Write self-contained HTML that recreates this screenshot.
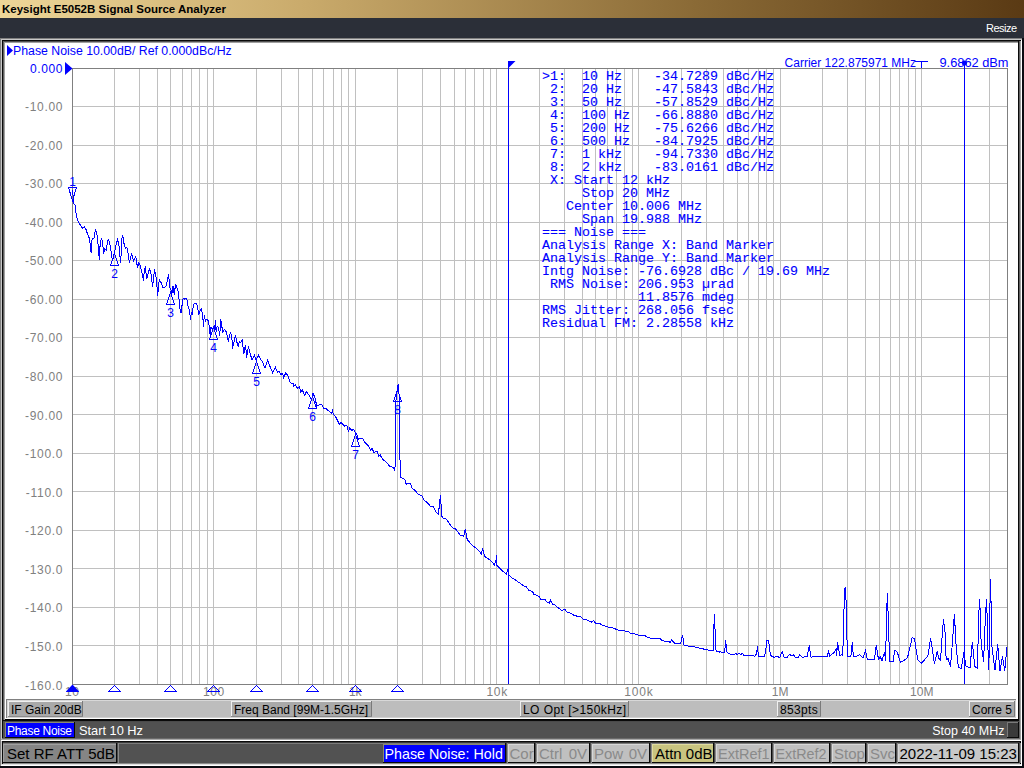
<!DOCTYPE html>
<html><head><meta charset="utf-8"><title>E5052B</title><style>
html,body{margin:0;padding:0;width:1024px;height:768px;overflow:hidden;background:#000;position:relative}
.a{position:absolute}
.t{position:absolute;white-space:pre;line-height:normal}
</style></head><body>
<div class="a" style="left:0px;top:0px;width:1024px;height:18px;background:linear-gradient(to right,#eed698 0%,#c9aa6b 30%,#8a6a36 68%,#5a3a14 100%);"></div>
<div class="t" style="left:2px;top:3px;font-size:11.5px;color:#000;font-weight:bold;font-family:'Liberation Sans',sans-serif;">Keysight E5052B Signal Source Analyzer</div>
<div class="a" style="left:0px;top:18px;width:1024px;height:20px;background:#2b2f38;"></div>
<div class="t" style="right:7.4px;top:22px;font-size:11px;color:#fff;font-weight:normal;font-family:'Liberation Sans',sans-serif;letter-spacing:-0.5px">Resize</div>
<div class="a" style="left:0px;top:38px;width:1024px;height:1px;background:#808080;"></div>
<div class="a" style="left:0px;top:39px;width:1022px;height:1px;background:#c8c8c8;"></div>
<div class="a" style="left:2px;top:40px;width:1018px;height:1px;background:#0a0a0a;"></div>
<div class="a" style="left:3px;top:41px;width:1016px;height:1px;background:#505050;"></div>
<div class="a" style="left:4px;top:42px;width:1015px;height:1px;background:#a0a0a0;"></div>
<div class="a" style="left:0px;top:38px;width:1px;height:730px;background:#808080;"></div>
<div class="a" style="left:1px;top:39px;width:1px;height:727px;background:#c8c8c8;"></div>
<div class="a" style="left:2px;top:40px;width:1px;height:699px;background:#0a0a0a;"></div>
<div class="a" style="left:3px;top:41px;width:1px;height:697px;background:#606060;"></div>
<div class="a" style="left:4px;top:42px;width:1px;height:696px;background:#a0a0a0;"></div>
<div class="a" style="left:1018px;top:41px;width:1px;height:679px;background:#0a0a0a;"></div>
<div class="a" style="left:1019px;top:41px;width:1px;height:698px;background:#606060;"></div>
<div class="a" style="left:1020px;top:41px;width:1px;height:698px;background:#a0a0a0;"></div>
<div class="a" style="left:1021px;top:40px;width:1px;height:726px;background:#ffffff;"></div>
<div class="a" style="left:1022px;top:38px;width:2px;height:730px;background:#0a0a10;"></div>
<div class="a" style="left:5px;top:43px;width:1013px;height:656px;background:#ffffff;"></div>
<svg class="a" style="left:0;top:0" width="1024" height="768" viewBox="0 0 1024 768"><path d="M114.5 68V684M139.5 68V684M157.5 68V684M170.5 68V684M182.5 68V684M191.5 68V684M199.5 68V684M207.5 68V684M213.5 68V684M256.5 68V684M281.5 68V684M298.5 68V684M312.5 68V684M323.5 68V684M333.5 68V684M341.5 68V684M348.5 68V684M355.5 68V684M397.5 68V684M422.5 68V684M440.5 68V684M454.5 68V684M465.5 68V684M474.5 68V684M483.5 68V684M490.5 68V684M496.5 68V684M539.5 68V684M564.5 68V684M582.5 68V684M595.5 68V684M607.5 68V684M616.5 68V684M624.5 68V684M632.5 68V684M638.5 68V684M681.5 68V684M706.5 68V684M723.5 68V684M737.5 68V684M748.5 68V684M758.5 68V684M766.5 68V684M773.5 68V684M780.5 68V684M822.5 68V684M847.5 68V684M865.5 68V684M879.5 68V684M890.5 68V684M899.5 68V684M908.5 68V684M915.5 68V684M921.5 68V684M964.5 68V684M989.5 68V684M964.5 68V684M989.5 68V684M72 106.5H1007M72 145.5H1007M72 183.5H1007M72 222.5H1007M72 260.5H1007M72 299.5H1007M72 337.5H1007M72 376.5H1007M72 414.5H1007M72 453.5H1007M72 491.5H1007M72 530.5H1007M72 568.5H1007M72 607.5H1007M72 645.5H1007" stroke="#c0c0c0" stroke-width="1" fill="none" shape-rendering="crispEdges"/><rect x="72.5" y="68.5" width="935" height="616" stroke="#808080" stroke-width="1" fill="none" shape-rendering="crispEdges"/><path d="M508.5 61V684M964.5 63V684" stroke="#0000ff" stroke-width="1" fill="none" shape-rendering="crispEdges"/><path d="M508 61H515.5L508 68.5Z" fill="#0000ff"/><circle cx="964.5" cy="63" r="2.5" fill="#0000ff"/><path d="M915 61.5H928M921.5 61V68" stroke="#0000ff" stroke-width="1" fill="none" shape-rendering="crispEdges"/><path d="M65 62L72.5 68.5L65 75Z" fill="#0000ff"/><path d="M7 45L13 50.5L7 56Z" fill="#0000ff"/></svg>

<div class="t" style="right:961px;top:62px;font-size:12px;color:#0000ff;font-weight:normal;font-family:'Liberation Sans',sans-serif;letter-spacing:0.6px">0.000</div>
<div class="t" style="right:960.8px;top:100px;font-size:12px;color:#808080;font-weight:normal;font-family:'Liberation Sans',sans-serif;letter-spacing:0.7px">-10.00</div>
<div class="t" style="right:960.8px;top:139px;font-size:12px;color:#808080;font-weight:normal;font-family:'Liberation Sans',sans-serif;letter-spacing:0.7px">-20.00</div>
<div class="t" style="right:960.8px;top:177px;font-size:12px;color:#808080;font-weight:normal;font-family:'Liberation Sans',sans-serif;letter-spacing:0.7px">-30.00</div>
<div class="t" style="right:960.8px;top:216px;font-size:12px;color:#808080;font-weight:normal;font-family:'Liberation Sans',sans-serif;letter-spacing:0.7px">-40.00</div>
<div class="t" style="right:960.8px;top:254px;font-size:12px;color:#808080;font-weight:normal;font-family:'Liberation Sans',sans-serif;letter-spacing:0.7px">-50.00</div>
<div class="t" style="right:960.8px;top:293px;font-size:12px;color:#808080;font-weight:normal;font-family:'Liberation Sans',sans-serif;letter-spacing:0.7px">-60.00</div>
<div class="t" style="right:960.8px;top:331px;font-size:12px;color:#808080;font-weight:normal;font-family:'Liberation Sans',sans-serif;letter-spacing:0.7px">-70.00</div>
<div class="t" style="right:960.8px;top:370px;font-size:12px;color:#808080;font-weight:normal;font-family:'Liberation Sans',sans-serif;letter-spacing:0.7px">-80.00</div>
<div class="t" style="right:960.8px;top:409px;font-size:12px;color:#808080;font-weight:normal;font-family:'Liberation Sans',sans-serif;letter-spacing:0.7px">-90.00</div>
<div class="t" style="right:960.8px;top:447px;font-size:12px;color:#808080;font-weight:normal;font-family:'Liberation Sans',sans-serif;letter-spacing:0.7px">-100.0</div>
<div class="t" style="right:960.8px;top:486px;font-size:12px;color:#808080;font-weight:normal;font-family:'Liberation Sans',sans-serif;letter-spacing:0.7px">-110.0</div>
<div class="t" style="right:960.8px;top:524px;font-size:12px;color:#808080;font-weight:normal;font-family:'Liberation Sans',sans-serif;letter-spacing:0.7px">-120.0</div>
<div class="t" style="right:960.8px;top:563px;font-size:12px;color:#808080;font-weight:normal;font-family:'Liberation Sans',sans-serif;letter-spacing:0.7px">-130.0</div>
<div class="t" style="right:960.8px;top:601px;font-size:12px;color:#808080;font-weight:normal;font-family:'Liberation Sans',sans-serif;letter-spacing:0.7px">-140.0</div>
<div class="t" style="right:960.8px;top:640px;font-size:12px;color:#808080;font-weight:normal;font-family:'Liberation Sans',sans-serif;letter-spacing:0.7px">-150.0</div>
<div class="t" style="right:960.8px;top:679px;font-size:12px;color:#808080;font-weight:normal;font-family:'Liberation Sans',sans-serif;letter-spacing:0.7px">-160.0</div>
<div class="t" style="left:-127.75px;width:400px;text-align:center;top:685px;font-size:12px;color:#808080;font-weight:normal;font-family:'Liberation Sans',sans-serif;letter-spacing:0.5px">10</div>
<div class="t" style="left:13.87px;width:400px;text-align:center;top:685px;font-size:12px;color:#808080;font-weight:normal;font-family:'Liberation Sans',sans-serif;letter-spacing:0.5px">100</div>
<div class="t" style="left:155.24px;width:400px;text-align:center;top:685px;font-size:12px;color:#808080;font-weight:normal;font-family:'Liberation Sans',sans-serif;letter-spacing:0px">1k</div>
<div class="t" style="left:297.27px;width:400px;text-align:center;top:685px;font-size:12px;color:#808080;font-weight:normal;font-family:'Liberation Sans',sans-serif;letter-spacing:0.8px">10k</div>
<div class="t" style="left:438.89px;width:400px;text-align:center;top:685px;font-size:12px;color:#808080;font-weight:normal;font-family:'Liberation Sans',sans-serif;letter-spacing:0.8px">100k</div>
<div class="t" style="left:580.11px;width:400px;text-align:center;top:685px;font-size:12px;color:#808080;font-weight:normal;font-family:'Liberation Sans',sans-serif;letter-spacing:0px">1M</div>
<div class="t" style="left:721.73px;width:400px;text-align:center;top:685px;font-size:12px;color:#808080;font-weight:normal;font-family:'Liberation Sans',sans-serif;letter-spacing:0px">10M</div>
<div class="t" style="left:13px;top:44px;font-size:12.3px;color:#0000ff;font-weight:normal;font-family:'Liberation Sans',sans-serif;">Phase Noise 10.00dB/ Ref 0.000dBc/Hz</div>
<div class="t" style="right:108px;top:56px;font-size:12px;color:#0000ff;font-weight:normal;font-family:'Liberation Sans',sans-serif;">Carrier 122.875971 MHz</div>
<div class="t" style="right:15.5px;top:55px;font-size:12.8px;color:#0000ff;font-weight:normal;font-family:'Liberation Sans',sans-serif;">9.6862 dBm</div>
<svg class="a" style="left:0;top:0" width="1024" height="768" viewBox="0 0 1024 768"><polyline points="72.5,190.0 73.0,195.0 73.0,198.9 73.0,202.3 75.4,205.7 75.9,212.6 77.4,219.4 79.3,223.3 82.3,228.2 84.2,226.7 85.7,228.7 87.6,234.1 89.6,239.0 91.0,251.6 91.5,252.6 92.0,239.9 93.0,238.5 94.0,238.0 95.4,229.2 96.9,234.1 98.4,246.8 99.3,259.9 100.3,240.9 101.8,238.5 103.3,248.7 103.7,254.1 104.7,248.7 106.2,249.7 108.1,239.4 109.6,241.9 111.1,251.6 112.5,261.4 115.0,249.7 117.4,239.4 118.9,244.4 119.8,255.3 120.6,262.6 121.2,252.6 121.6,240.8 122.6,234.8 123.5,239.9 124.4,246.2 125.7,248.1 126.7,247.1 127.6,250.8 128.5,255.3 129.4,263.1 130.3,258.1 131.7,254.4 132.6,256.3 133.5,262.2 134.4,259.0 135.8,256.3 136.7,262.6 137.6,268.1 138.5,262.6 139.9,264.5 141.2,269.9 142.2,273.6 143.5,280.9 144.4,269.0 145.3,267.2 146.7,279.0 147.6,275.4 149.4,268.1 151.3,275.4 152.6,287.3 154.5,269.0 155.8,275.4 156.7,283.6 157.7,295.5 158.6,284.5 159.3,280.0 160.0,281.2 161.4,283.0 162.7,287.1 164.6,287.6 166.4,285.3 167.7,278.9 168.7,274.4 169.1,279.9 170.0,288.0 171.4,290.3 171.9,293.5 172.8,286.2 173.7,286.2 174.1,295.3 174.6,291.7 175.5,284.9 176.4,286.2 178.2,291.7 179.1,299.4 180.1,309.9 181.0,312.7 181.9,306.3 183.2,298.1 184.6,299.0 186.0,298.1 187.3,300.8 188.3,308.1 189.6,309.9 190.5,320.0 191.4,311.8 192.4,315.4 193.3,304.5 194.6,303.6 196.5,303.6 197.8,308.1 198.7,314.5 200.1,310.8 201.5,309.0 202.8,317.2 203.6,327.3 204.2,315.4 205.6,320.9 206.9,319.0 208.3,320.9 209.7,328.2 210.1,335.5 211.0,327.3 212.4,330.0 213.4,326.2 214.3,330.8 215.5,320.3 216.1,331.7 217.0,327.1 217.9,326.2 218.8,329.9 219.7,336.2 220.7,319.4 221.6,325.3 222.9,332.1 224.3,329.4 226.1,331.7 227.5,336.2 228.4,342.2 229.3,336.2 230.7,332.1 232.1,340.8 232.5,349.4 233.4,343.5 234.3,340.8 235.5,335.3 236.6,341.2 238.4,347.2 239.3,341.7 240.7,342.6 242.1,339.9 242.5,345.3 243.4,348.1 243.9,353.6 244.8,347.2 245.7,345.3 246.6,358.1 248.5,346.3 249.8,352.6 252.1,359.9 254.4,355.4 256.2,359.9 258.5,355.4 260.8,359.9 262.6,361.8 264.9,368.1 267.6,359.9 270.3,367.2 272.0,370.9 272.3,373.7 275.4,367.4 277.4,372.1 279.3,371.7 280.9,374.5 282.5,373.3 283.6,377.6 285.6,373.3 287.9,375.6 290.3,382.7 291.4,383.4 293.0,383.4 293.8,386.2 295.3,384.6 297.3,388.1 299.3,386.6 300.8,392.0 302.4,390.1 304.7,395.5 306.3,391.6 310.6,397.5 311.4,400.6 312.9,393.2 314.9,397.5 316.8,406.1 318.4,405.3 319.6,404.5 321.9,404.9 324.2,408.8 325.8,408.0 327.4,410.0 329.7,411.6 331.7,413.9 332.5,409.2 333.2,413.9 335.2,416.2 336.5,418.5 339.5,424.4 340.8,422.3 344.6,426.1 346.7,425.2 348.4,431.2 349.7,428.2 351.8,430.3 353.5,429.5 355.6,432.8 357.3,435.4 358.1,439.2 360.2,438.3 362.8,438.8 365.3,443.0 368.7,446.4 370.4,450.2 372.1,448.5 373.8,452.3 377.1,451.5 378.8,456.1 380.1,454.8 382.6,459.1 386.0,462.0 389.8,466.3 393.2,467.5 394.5,470.1 395.3,465.0 395.5,432.0 396.0,400.0 397.3,390.0 398.2,384.0 399.0,392.0 399.4,420.0 400.0,460.0 400.3,470.0 400.3,477.8 403.5,478.2 405.4,480.2 406.2,484.5 407.4,483.7 410.5,483.7 411.7,487.6 415.2,490.7 418.7,494.6 421.8,495.4 424.2,500.1 428.1,503.6 430.4,506.3 433.2,506.3 436.3,512.2 438.6,514.5 439.4,502.8 440.6,495.0 441.1,506.3 441.6,515.7 442.9,518.0 445.7,518.4 449.6,523.9 452.7,527.8 455.5,528.8 460.3,535.1 463.3,535.6 463.8,536.1 465.2,529.3 465.7,531.7 467.2,539.5 470.1,543.0 473.0,545.9 477.0,548.8 481.3,553.7 482.5,549.3 483.3,551.3 484.8,556.6 490.1,560.0 494.5,564.9 496.0,560.0 496.5,555.2 497.0,565.4 501.4,569.8 506.2,574.2 507.7,570.3 508.7,574.7 512.1,578.1 515.0,579.6 520.4,583.5 524.3,586.4 526.3,586.9 529.2,590.8 532.4,591.3 533.9,594.3 535.9,594.8 539.3,596.7 540.7,599.2 545.1,599.6 547.6,602.6 549.5,603.0 550.5,600.1 552.5,604.0 554.9,605.0 557.8,607.5 560.3,609.4 562.2,610.6 564.7,609.2 567.1,612.3 570.0,612.8 573.9,615.3 577.9,616.4 580.8,616.7 583.2,619.2 586.2,619.7 589.6,621.1 591.5,622.1 593.5,620.6 595.9,623.6 599.8,623.6 602.3,625.0 606.2,626.5 609.1,627.5 613.0,628.0 616.4,629.4 618.9,630.4 623.8,630.9 628.0,631.3 630.4,633.3 632.9,633.8 636.8,634.3 638.3,635.3 644.6,635.3 646.6,636.7 650.5,638.2 656.8,638.5 659.3,638.7 659.7,638.2 661.7,640.1 665.1,641.4 669.0,641.6 670.0,642.6 671.5,640.1 674.4,643.1 680.7,643.4 681.7,638.7 682.5,635.3 683.2,639.6 683.7,645.0 687.6,646.0 693.4,646.5 696.4,647.5 700.3,648.2 704.2,649.2 709.1,650.2 713.4,650.6 713.7,632.3 714.4,613.8 715.1,631.3 715.7,648.4 716.4,651.4 719.3,652.1 720.3,651.4 721.6,652.3 724.7,652.3 725.2,646.0 725.7,640.1 726.1,645.5 726.5,651.5 728.0,653.0 730.9,654.3 734.8,654.3 735.8,653.3 736.7,654.5 739.2,653.5 740.6,654.7 742.6,653.3 743.6,655.4 753.3,655.4 754.8,656.4 755.8,655.4 757.3,649.1 757.7,646.2 758.2,655.4 758.7,656.4 764.6,656.4 766.0,648.1 767.0,640.3 768.5,640.3 769.5,648.1 770.4,655.4 773.9,657.2 777.3,656.4 779.7,657.6 782.2,651.5 784.1,657.4 787.0,657.6 789.5,654.3 791.4,655.9 793.4,654.7 795.3,657.6 798.3,657.4 799.7,654.7 801.7,656.9 803.1,657.6 804.6,656.4 807.1,656.4 808.5,649.6 809.5,645.2 810.5,656.4 811.4,657.6 812.4,656.4 826.0,656.4 827.3,656.6 828.4,651.6 829.8,655.9 834.4,652.3 836.1,649.5 836.6,655.9 837.6,642.3 838.7,649.5 839.9,655.9 841.6,654.5 842.7,655.9 843.7,624.4 844.4,590.0 845.4,587.2 846.3,605.8 847.0,640.2 848.0,656.6 850.9,655.9 852.3,641.6 853.3,656.6 857.3,655.9 859.5,654.5 863.0,658.0 865.5,650.2 867.4,659.5 874.5,659.5 876.2,645.2 878.5,659.5 880.2,656.6 882.0,660.9 884.5,652.3 885.7,660.9 886.3,623.0 887.4,592.9 888.4,621.6 889.6,661.7 893.1,661.7 894.6,650.2 897.3,652.2 900.5,662.3 904.4,660.0 907.5,657.7 910.6,644.4 912.2,637.3 914.5,638.9 917.7,660.0 921.6,663.1 927.8,656.0 929.0,649.0 930.6,638.1 932.5,650.6 934.4,663.9 937.2,651.4 938.8,658.4 940.6,660.0 941.9,639.7 943.4,619.4 945.0,631.9 946.2,660.0 948.1,658.4 950.5,667.0 952.5,641.2 954.4,613.9 956.2,647.5 958.3,667.0 961.4,668.6 963.8,652.2 966.1,666.2 970.0,667.8 972.3,642.0 974.7,666.2 977.5,668.6 978.6,616.2 979.7,599.0 981.2,644.4 983.6,661.6 985.6,611.6 986.7,599.0 987.7,641.2 988.8,670.2 989.8,611.6 990.6,578.8 991.9,646.0 995.0,670.2 997.7,644.4 1000.0,671.0 1002.5,656.1 1004.7,671.0 1007.0,646.7" stroke="#0000ff" stroke-width="1" fill="none" shape-rendering="crispEdges"/><path d="M68.5 187.5H76.5L72.5 200.5Z" stroke="#0000ff" stroke-width="1" fill="none" shape-rendering="crispEdges"/><path d="M72.5 684.5L79 691.5V692H66V691.5Z" fill="#0000ff"/><path d="M114.5 253.5L118.5 265.5H110.5Z" stroke="#0000ff" stroke-width="1" fill="none" shape-rendering="crispEdges"/><path d="M114.5 685.5L120.5 691.5H108.5Z" stroke="#0000ff" stroke-width="1" fill="none" shape-rendering="crispEdges"/><path d="M170.5 292.5L174.5 304.5H166.5Z" stroke="#0000ff" stroke-width="1" fill="none" shape-rendering="crispEdges"/><path d="M170.5 685.5L176.5 691.5H164.5Z" stroke="#0000ff" stroke-width="1" fill="none" shape-rendering="crispEdges"/><path d="M213.5 327.5L217.5 339.5H209.5Z" stroke="#0000ff" stroke-width="1" fill="none" shape-rendering="crispEdges"/><path d="M213.5 685.5L219.5 691.5H207.5Z" stroke="#0000ff" stroke-width="1" fill="none" shape-rendering="crispEdges"/><path d="M256.5 361.5L260.5 373.5H252.5Z" stroke="#0000ff" stroke-width="1" fill="none" shape-rendering="crispEdges"/><path d="M256.5 685.5L262.5 691.5H250.5Z" stroke="#0000ff" stroke-width="1" fill="none" shape-rendering="crispEdges"/><path d="M312.5 396.5L316.5 408.5H308.5Z" stroke="#0000ff" stroke-width="1" fill="none" shape-rendering="crispEdges"/><path d="M312.5 685.5L318.5 691.5H306.5Z" stroke="#0000ff" stroke-width="1" fill="none" shape-rendering="crispEdges"/><path d="M355.5 434.5L359.5 446.5H351.5Z" stroke="#0000ff" stroke-width="1" fill="none" shape-rendering="crispEdges"/><path d="M355.5 685.5L361.5 691.5H349.5Z" stroke="#0000ff" stroke-width="1" fill="none" shape-rendering="crispEdges"/><path d="M397.5 389.5L401.5 401.5H393.5Z" stroke="#0000ff" stroke-width="1" fill="none" shape-rendering="crispEdges"/><path d="M397.5 685.5L403.5 691.5H391.5Z" stroke="#0000ff" stroke-width="1" fill="none" shape-rendering="crispEdges"/></svg>
<div class="t" style="left:-127.5px;width:400px;text-align:center;top:175px;font-size:12px;color:#0000ff;font-weight:normal;font-family:'Liberation Sans',sans-serif;">1</div>
<div class="t" style="left:-85.5px;width:400px;text-align:center;top:267px;font-size:12px;color:#0000ff;font-weight:normal;font-family:'Liberation Sans',sans-serif;">2</div>
<div class="t" style="left:-29.5px;width:400px;text-align:center;top:306px;font-size:12px;color:#0000ff;font-weight:normal;font-family:'Liberation Sans',sans-serif;">3</div>
<div class="t" style="left:13.5px;width:400px;text-align:center;top:341px;font-size:12px;color:#0000ff;font-weight:normal;font-family:'Liberation Sans',sans-serif;">4</div>
<div class="t" style="left:56.5px;width:400px;text-align:center;top:375px;font-size:12px;color:#0000ff;font-weight:normal;font-family:'Liberation Sans',sans-serif;">5</div>
<div class="t" style="left:112.5px;width:400px;text-align:center;top:410px;font-size:12px;color:#0000ff;font-weight:normal;font-family:'Liberation Sans',sans-serif;">6</div>
<div class="t" style="left:155.5px;width:400px;text-align:center;top:448px;font-size:12px;color:#0000ff;font-weight:normal;font-family:'Liberation Sans',sans-serif;">7</div>
<div class="t" style="left:197.5px;width:400px;text-align:center;top:403px;font-size:12px;color:#0000ff;font-weight:normal;font-family:'Liberation Sans',sans-serif;">8</div>
<div class="t" style="left:542px;top:69px;font-size:13.33px;color:#0000ff;font-weight:normal;font-family:'Liberation Mono',monospace;-webkit-text-stroke:0.1px #0000ff">>1:  10 Hz    -34.7289 dBc/Hz</div>
<div class="t" style="left:542px;top:82px;font-size:13.33px;color:#0000ff;font-weight:normal;font-family:'Liberation Mono',monospace;-webkit-text-stroke:0.1px #0000ff"> 2:  20 Hz    -47.5843 dBc/Hz</div>
<div class="t" style="left:542px;top:95px;font-size:13.33px;color:#0000ff;font-weight:normal;font-family:'Liberation Mono',monospace;-webkit-text-stroke:0.1px #0000ff"> 3:  50 Hz    -57.8529 dBc/Hz</div>
<div class="t" style="left:542px;top:108px;font-size:13.33px;color:#0000ff;font-weight:normal;font-family:'Liberation Mono',monospace;-webkit-text-stroke:0.1px #0000ff"> 4:  100 Hz   -66.8880 dBc/Hz</div>
<div class="t" style="left:542px;top:121px;font-size:13.33px;color:#0000ff;font-weight:normal;font-family:'Liberation Mono',monospace;-webkit-text-stroke:0.1px #0000ff"> 5:  200 Hz   -75.6266 dBc/Hz</div>
<div class="t" style="left:542px;top:134px;font-size:13.33px;color:#0000ff;font-weight:normal;font-family:'Liberation Mono',monospace;-webkit-text-stroke:0.1px #0000ff"> 6:  500 Hz   -84.7925 dBc/Hz</div>
<div class="t" style="left:542px;top:147px;font-size:13.33px;color:#0000ff;font-weight:normal;font-family:'Liberation Mono',monospace;-webkit-text-stroke:0.1px #0000ff"> 7:  1 kHz    -94.7330 dBc/Hz</div>
<div class="t" style="left:542px;top:160px;font-size:13.33px;color:#0000ff;font-weight:normal;font-family:'Liberation Mono',monospace;-webkit-text-stroke:0.1px #0000ff"> 8:  2 kHz    -83.0161 dBc/Hz</div>
<div class="t" style="left:542px;top:173px;font-size:13.33px;color:#0000ff;font-weight:normal;font-family:'Liberation Mono',monospace;-webkit-text-stroke:0.1px #0000ff"> X: Start 12 kHz</div>
<div class="t" style="left:542px;top:186px;font-size:13.33px;color:#0000ff;font-weight:normal;font-family:'Liberation Mono',monospace;-webkit-text-stroke:0.1px #0000ff">     Stop 20 MHz</div>
<div class="t" style="left:542px;top:199px;font-size:13.33px;color:#0000ff;font-weight:normal;font-family:'Liberation Mono',monospace;-webkit-text-stroke:0.1px #0000ff">   Center 10.006 MHz</div>
<div class="t" style="left:542px;top:212px;font-size:13.33px;color:#0000ff;font-weight:normal;font-family:'Liberation Mono',monospace;-webkit-text-stroke:0.1px #0000ff">     Span 19.988 MHz</div>
<div class="t" style="left:542px;top:225px;font-size:13.33px;color:#0000ff;font-weight:normal;font-family:'Liberation Mono',monospace;-webkit-text-stroke:0.1px #0000ff">=== Noise ===</div>
<div class="t" style="left:542px;top:238px;font-size:13.33px;color:#0000ff;font-weight:normal;font-family:'Liberation Mono',monospace;-webkit-text-stroke:0.1px #0000ff">Analysis Range X: Band Marker</div>
<div class="t" style="left:542px;top:251px;font-size:13.33px;color:#0000ff;font-weight:normal;font-family:'Liberation Mono',monospace;-webkit-text-stroke:0.1px #0000ff">Analysis Range Y: Band Marker</div>
<div class="t" style="left:542px;top:264px;font-size:13.33px;color:#0000ff;font-weight:normal;font-family:'Liberation Mono',monospace;-webkit-text-stroke:0.1px #0000ff">Intg Noise: -76.6928 dBc / 19.69 MHz</div>
<div class="t" style="left:542px;top:277px;font-size:13.33px;color:#0000ff;font-weight:normal;font-family:'Liberation Mono',monospace;-webkit-text-stroke:0.1px #0000ff"> RMS Noise: 206.953 &#181;rad</div>
<div class="t" style="left:542px;top:290px;font-size:13.33px;color:#0000ff;font-weight:normal;font-family:'Liberation Mono',monospace;-webkit-text-stroke:0.1px #0000ff">            11.8576 mdeg</div>
<div class="t" style="left:542px;top:303px;font-size:13.33px;color:#0000ff;font-weight:normal;font-family:'Liberation Mono',monospace;-webkit-text-stroke:0.1px #0000ff">RMS Jitter: 268.056 fsec</div>
<div class="t" style="left:542px;top:316px;font-size:13.33px;color:#0000ff;font-weight:normal;font-family:'Liberation Mono',monospace;-webkit-text-stroke:0.1px #0000ff">Residual FM: 2.28558 kHz</div>
<div class="a" style="left:5px;top:699px;width:1013px;height:20px;background:#ffffff;"></div>
<div class="a" style="left:6px;top:699px;width:1010px;height:1px;background:#808080;"></div>
<div class="a" style="left:6px;top:699px;width:1px;height:19px;background:#808080;"></div>
<div class="a" style="left:7px;top:700px;width:1009px;height:1px;background:#d8d8d8;"></div>
<div class="a" style="left:7px;top:700px;width:1px;height:18px;background:#d8d8d8;"></div>
<div class="a" style="left:8px;top:701px;width:1008px;height:16px;background:#bdbdbd;"></div>
<div class="a" style="left:7px;top:717px;width:1009px;height:1px;background:#d0d0d0;"></div>
<div class="a" style="left:1015px;top:700px;width:1px;height:17px;background:#d0d0d0;"></div>
<div class="a" style="left:8px;top:701px;width:75px;height:16px;background:#a9a9a9;"></div>
<div class="a" style="left:8px;top:701px;width:74px;height:1px;background:#f0f0f0;"></div>
<div class="a" style="left:8px;top:701px;width:1px;height:15px;background:#f0f0f0;"></div>
<div class="a" style="left:82px;top:701px;width:1px;height:16px;background:#7a7a7a;"></div>
<div class="a" style="left:8px;top:716px;width:75px;height:1px;background:#8a8a8a;"></div>
<div class="t" style="left:11px;top:703px;font-size:12px;color:#000;font-weight:normal;font-family:'Liberation Sans',sans-serif;">IF Gain 20dB</div>
<div class="a" style="left:231px;top:701px;width:141px;height:16px;background:#a9a9a9;"></div>
<div class="a" style="left:231px;top:701px;width:140px;height:1px;background:#f0f0f0;"></div>
<div class="a" style="left:231px;top:701px;width:1px;height:15px;background:#f0f0f0;"></div>
<div class="a" style="left:371px;top:701px;width:1px;height:16px;background:#7a7a7a;"></div>
<div class="a" style="left:231px;top:716px;width:141px;height:1px;background:#8a8a8a;"></div>
<div class="t" style="left:234px;top:703px;font-size:12px;color:#000;font-weight:normal;font-family:'Liberation Sans',sans-serif;">Freq Band [99M-1.5GHz]</div>
<div class="a" style="left:520px;top:701px;width:109px;height:16px;background:#a9a9a9;"></div>
<div class="a" style="left:520px;top:701px;width:108px;height:1px;background:#f0f0f0;"></div>
<div class="a" style="left:520px;top:701px;width:1px;height:15px;background:#f0f0f0;"></div>
<div class="a" style="left:628px;top:701px;width:1px;height:16px;background:#7a7a7a;"></div>
<div class="a" style="left:520px;top:716px;width:109px;height:1px;background:#8a8a8a;"></div>
<div class="t" style="left:523px;top:703px;font-size:12px;color:#000;font-weight:normal;font-family:'Liberation Sans',sans-serif;letter-spacing:0.45px">LO Opt [&gt;150kHz]</div>
<div class="a" style="left:777px;top:701px;width:44px;height:16px;background:#a9a9a9;"></div>
<div class="a" style="left:777px;top:701px;width:43px;height:1px;background:#f0f0f0;"></div>
<div class="a" style="left:777px;top:701px;width:1px;height:15px;background:#f0f0f0;"></div>
<div class="a" style="left:820px;top:701px;width:1px;height:16px;background:#7a7a7a;"></div>
<div class="a" style="left:777px;top:716px;width:44px;height:1px;background:#8a8a8a;"></div>
<div class="t" style="left:780px;top:703px;font-size:12px;color:#000;font-weight:normal;font-family:'Liberation Sans',sans-serif;letter-spacing:0.35px">853pts</div>
<div class="a" style="left:969px;top:701px;width:46px;height:16px;background:#a9a9a9;"></div>
<div class="a" style="left:969px;top:701px;width:45px;height:1px;background:#f0f0f0;"></div>
<div class="a" style="left:969px;top:701px;width:1px;height:15px;background:#f0f0f0;"></div>
<div class="a" style="left:1014px;top:701px;width:1px;height:16px;background:#7a7a7a;"></div>
<div class="a" style="left:969px;top:716px;width:46px;height:1px;background:#8a8a8a;"></div>
<div class="t" style="left:972px;top:703px;font-size:12px;color:#000;font-weight:normal;font-family:'Liberation Sans',sans-serif;">Corre 5</div>
<div class="a" style="left:2px;top:720px;width:1017px;height:1px;background:#0a0a0a;"></div>
<div class="a" style="left:3px;top:721px;width:1016px;height:17px;background:#515151;"></div>
<div class="a" style="left:3px;top:721px;width:1016px;height:1px;background:#4a4a4a;"></div>
<div class="a" style="left:5px;top:722px;width:70px;height:16px;background:#0a0a00;"></div>
<div class="a" style="left:5px;top:722px;width:69px;height:1px;background:#8a8a70;"></div>
<div class="a" style="left:5px;top:722px;width:1px;height:15px;background:#8a8a70;"></div>
<div class="a" style="left:6px;top:723px;width:68px;height:14px;background:#0000ff;"></div>
<div class="t" style="left:7px;top:724px;font-size:12px;color:#fff;font-weight:normal;font-family:'Liberation Sans',sans-serif;letter-spacing:-0.3px">Phase Noise</div>
<div class="t" style="left:79px;top:723px;font-size:12.8px;color:#fff;font-weight:normal;font-family:'Liberation Sans',sans-serif;">Start 10 Hz</div>
<div class="t" style="right:19.5px;top:724px;font-size:12.5px;color:#fff;font-weight:normal;font-family:'Liberation Sans',sans-serif;">Stop 40 MHz</div>
<div class="a" style="left:1007px;top:722px;width:12px;height:16px;background:#0a0a0a;"></div>
<div class="a" style="left:1007px;top:722px;width:11px;height:1px;background:#7a7a7a;"></div>
<div class="a" style="left:1007px;top:722px;width:1px;height:15px;background:#7a7a7a;"></div>
<div class="a" style="left:1008px;top:723px;width:10px;height:14px;background:#3a3a3a;"></div>
<div class="a" style="left:2px;top:738px;width:1018px;height:1px;background:#6a6a6a;"></div>
<div class="a" style="left:1px;top:739px;width:1020px;height:1px;background:#a8a8a8;"></div>
<div class="a" style="left:1px;top:740px;width:1020px;height:1px;background:#ffffff;"></div>
<div class="a" style="left:2px;top:741px;width:1019px;height:1px;background:#0a0a0a;"></div>
<div class="a" style="left:3px;top:742px;width:1017px;height:1px;background:#3a3a3a;"></div>
<div class="a" style="left:3px;top:743px;width:1017px;height:1px;background:#7a7a7a;"></div>
<div class="a" style="left:3px;top:744px;width:1017px;height:19px;background:#525252;"></div>
<div class="a" style="left:2px;top:742px;width:1px;height:22px;background:#0a0a0a;"></div>
<div class="a" style="left:3px;top:763px;width:1017px;height:1px;background:#8a8a8a;"></div>
<div class="a" style="left:1px;top:764px;width:1020px;height:1px;background:#e0e0e0;"></div>
<div class="a" style="left:1px;top:765px;width:1020px;height:1px;background:#ffffff;"></div>
<div class="a" style="left:0px;top:766px;width:1024px;height:2px;background:#0a0a10;"></div>
<div class="a" style="left:3px;top:744px;width:113px;height:18px;background:#858585;"></div>
<div class="a" style="left:3px;top:744px;width:113px;height:1px;background:#a0a0a0;"></div>
<div class="a" style="left:3px;top:744px;width:1px;height:18px;background:#a0a0a0;"></div>
<div class="a" style="left:116px;top:743px;width:1px;height:20px;background:#0a0a0a;"></div>
<div class="a" style="left:3px;top:762px;width:113px;height:1px;background:#0a0a0a;"></div>
<div class="a" style="left:117px;top:743px;width:1px;height:20px;background:#4a4a4a;"></div>
<div class="a" style="left:118px;top:743px;width:1px;height:20px;background:#8a8a8a;"></div>
<div class="t" style="left:7px;top:745px;font-size:15px;color:#000;font-weight:normal;font-family:'Liberation Sans',sans-serif;">Set RF ATT 5dB</div>
<div class="a" style="left:383px;top:744px;width:122px;height:18px;background:#0000ff;"></div>
<div class="a" style="left:383px;top:744px;width:122px;height:1px;background:#8a8a70;"></div>
<div class="a" style="left:383px;top:744px;width:1px;height:18px;background:#8a8a70;"></div>
<div class="a" style="left:505px;top:743px;width:1px;height:20px;background:#0a0a0a;"></div>
<div class="a" style="left:383px;top:762px;width:122px;height:1px;background:#0a0a0a;"></div>
<div class="a" style="left:506px;top:743px;width:1px;height:20px;background:#4a4a4a;"></div>
<div class="a" style="left:507px;top:743px;width:1px;height:20px;background:#8a8a8a;"></div>
<div class="t" style="left:384.5px;top:746px;font-size:14.3px;color:#fff;font-weight:normal;font-family:'Liberation Sans',sans-serif;">Phase Noise: Hold</div>
<div class="a" style="left:508px;top:744px;width:26px;height:18px;background:#c0c0c0;"></div>
<div class="a" style="left:508px;top:744px;width:26px;height:1px;background:#d8d8d8;"></div>
<div class="a" style="left:508px;top:744px;width:1px;height:18px;background:#d8d8d8;"></div>
<div class="a" style="left:534px;top:743px;width:1px;height:20px;background:#0a0a0a;"></div>
<div class="a" style="left:508px;top:762px;width:26px;height:1px;background:#0a0a0a;"></div>
<div class="a" style="left:535px;top:743px;width:1px;height:20px;background:#4a4a4a;"></div>
<div class="a" style="left:536px;top:743px;width:1px;height:20px;background:#8a8a8a;"></div>
<div class="t" style="left:509.5px;top:745px;font-size:15px;color:#8a8a8a;font-weight:normal;font-family:'Liberation Sans',sans-serif;">Cor</div>
<div class="a" style="left:537px;top:744px;width:52px;height:18px;background:#c0c0c0;"></div>
<div class="a" style="left:537px;top:744px;width:52px;height:1px;background:#d8d8d8;"></div>
<div class="a" style="left:537px;top:744px;width:1px;height:18px;background:#d8d8d8;"></div>
<div class="a" style="left:589px;top:743px;width:1px;height:20px;background:#0a0a0a;"></div>
<div class="a" style="left:537px;top:762px;width:52px;height:1px;background:#0a0a0a;"></div>
<div class="a" style="left:590px;top:743px;width:1px;height:20px;background:#4a4a4a;"></div>
<div class="a" style="left:591px;top:743px;width:1px;height:20px;background:#8a8a8a;"></div>
<div class="t" style="left:539px;top:745px;font-size:15px;color:#8a8a8a;font-weight:normal;font-family:'Liberation Sans',sans-serif;">Ctrl</div>
<div class="t" style="right:437px;top:745px;font-size:15px;color:#8a8a8a;font-weight:normal;font-family:'Liberation Sans',sans-serif;">0V</div>
<div class="a" style="left:592px;top:744px;width:57px;height:18px;background:#c0c0c0;"></div>
<div class="a" style="left:592px;top:744px;width:57px;height:1px;background:#d8d8d8;"></div>
<div class="a" style="left:592px;top:744px;width:1px;height:18px;background:#d8d8d8;"></div>
<div class="a" style="left:649px;top:743px;width:1px;height:20px;background:#0a0a0a;"></div>
<div class="a" style="left:592px;top:762px;width:57px;height:1px;background:#0a0a0a;"></div>
<div class="a" style="left:650px;top:743px;width:1px;height:20px;background:#4a4a4a;"></div>
<div class="a" style="left:651px;top:743px;width:1px;height:20px;background:#8a8a8a;"></div>
<div class="t" style="left:594px;top:745px;font-size:15px;color:#8a8a8a;font-weight:normal;font-family:'Liberation Sans',sans-serif;">Pow</div>
<div class="t" style="right:377px;top:745px;font-size:15px;color:#8a8a8a;font-weight:normal;font-family:'Liberation Sans',sans-serif;">0V</div>
<div class="a" style="left:652px;top:744px;width:61px;height:18px;background:#c8c480;"></div>
<div class="a" style="left:652px;top:744px;width:61px;height:1px;background:#e0dca0;"></div>
<div class="a" style="left:652px;top:744px;width:1px;height:18px;background:#e0dca0;"></div>
<div class="a" style="left:713px;top:743px;width:1px;height:20px;background:#0a0a0a;"></div>
<div class="a" style="left:652px;top:762px;width:61px;height:1px;background:#0a0a0a;"></div>
<div class="a" style="left:714px;top:743px;width:1px;height:20px;background:#4a4a4a;"></div>
<div class="a" style="left:715px;top:743px;width:1px;height:20px;background:#8a8a8a;"></div>
<div class="t" style="left:655px;top:745px;font-size:15px;color:#000;font-weight:normal;font-family:'Liberation Sans',sans-serif;">Attn 0dB</div>
<div class="a" style="left:716px;top:744px;width:55px;height:18px;background:#c0c0c0;"></div>
<div class="a" style="left:716px;top:744px;width:55px;height:1px;background:#d8d8d8;"></div>
<div class="a" style="left:716px;top:744px;width:1px;height:18px;background:#d8d8d8;"></div>
<div class="a" style="left:771px;top:743px;width:1px;height:20px;background:#0a0a0a;"></div>
<div class="a" style="left:716px;top:762px;width:55px;height:1px;background:#0a0a0a;"></div>
<div class="a" style="left:772px;top:743px;width:1px;height:20px;background:#4a4a4a;"></div>
<div class="a" style="left:773px;top:743px;width:1px;height:20px;background:#8a8a8a;"></div>
<div class="t" style="left:718px;top:746px;font-size:14.5px;color:#8a8a8a;font-weight:normal;font-family:'Liberation Sans',sans-serif;">ExtRef1</div>
<div class="a" style="left:774px;top:744px;width:55px;height:18px;background:#c0c0c0;"></div>
<div class="a" style="left:774px;top:744px;width:55px;height:1px;background:#d8d8d8;"></div>
<div class="a" style="left:774px;top:744px;width:1px;height:18px;background:#d8d8d8;"></div>
<div class="a" style="left:829px;top:743px;width:1px;height:20px;background:#0a0a0a;"></div>
<div class="a" style="left:774px;top:762px;width:55px;height:1px;background:#0a0a0a;"></div>
<div class="a" style="left:830px;top:743px;width:1px;height:20px;background:#4a4a4a;"></div>
<div class="a" style="left:831px;top:743px;width:1px;height:20px;background:#8a8a8a;"></div>
<div class="t" style="left:775.5px;top:746px;font-size:14.3px;color:#8a8a8a;font-weight:normal;font-family:'Liberation Sans',sans-serif;">ExtRef2</div>
<div class="a" style="left:832px;top:744px;width:33px;height:18px;background:#c0c0c0;"></div>
<div class="a" style="left:832px;top:744px;width:33px;height:1px;background:#d8d8d8;"></div>
<div class="a" style="left:832px;top:744px;width:1px;height:18px;background:#d8d8d8;"></div>
<div class="a" style="left:865px;top:743px;width:1px;height:20px;background:#0a0a0a;"></div>
<div class="a" style="left:832px;top:762px;width:33px;height:1px;background:#0a0a0a;"></div>
<div class="a" style="left:866px;top:743px;width:1px;height:20px;background:#4a4a4a;"></div>
<div class="a" style="left:867px;top:743px;width:1px;height:20px;background:#8a8a8a;"></div>
<div class="t" style="left:834px;top:745px;font-size:15px;color:#8a8a8a;font-weight:normal;font-family:'Liberation Sans',sans-serif;">Stop</div>
<div class="a" style="left:868px;top:744px;width:27px;height:18px;background:#c0c0c0;"></div>
<div class="a" style="left:868px;top:744px;width:27px;height:1px;background:#d8d8d8;"></div>
<div class="a" style="left:868px;top:744px;width:1px;height:18px;background:#d8d8d8;"></div>
<div class="a" style="left:895px;top:743px;width:1px;height:20px;background:#0a0a0a;"></div>
<div class="a" style="left:868px;top:762px;width:27px;height:1px;background:#0a0a0a;"></div>
<div class="a" style="left:896px;top:743px;width:1px;height:20px;background:#4a4a4a;"></div>
<div class="a" style="left:897px;top:743px;width:1px;height:20px;background:#8a8a8a;"></div>
<div class="t" style="left:870px;top:745px;font-size:15px;color:#8a8a8a;font-weight:normal;font-family:'Liberation Sans',sans-serif;">Svc</div>
<div class="a" style="left:898px;top:744px;width:120px;height:18px;background:#c8c8c8;"></div>
<div class="a" style="left:898px;top:744px;width:120px;height:1px;background:#d8d8d8;"></div>
<div class="a" style="left:898px;top:744px;width:1px;height:18px;background:#d8d8d8;"></div>
<div class="a" style="left:1018px;top:743px;width:1px;height:20px;background:#0a0a0a;"></div>
<div class="a" style="left:898px;top:762px;width:120px;height:1px;background:#0a0a0a;"></div>
<div class="a" style="left:1019px;top:743px;width:1px;height:20px;background:#4a4a4a;"></div>
<div class="a" style="left:1020px;top:743px;width:1px;height:20px;background:#8a8a8a;"></div>
<div class="t" style="left:899.5px;top:745px;font-size:15px;color:#000;font-weight:normal;font-family:'Liberation Sans',sans-serif;">2022-11-09 15:23</div>
</body></html>
